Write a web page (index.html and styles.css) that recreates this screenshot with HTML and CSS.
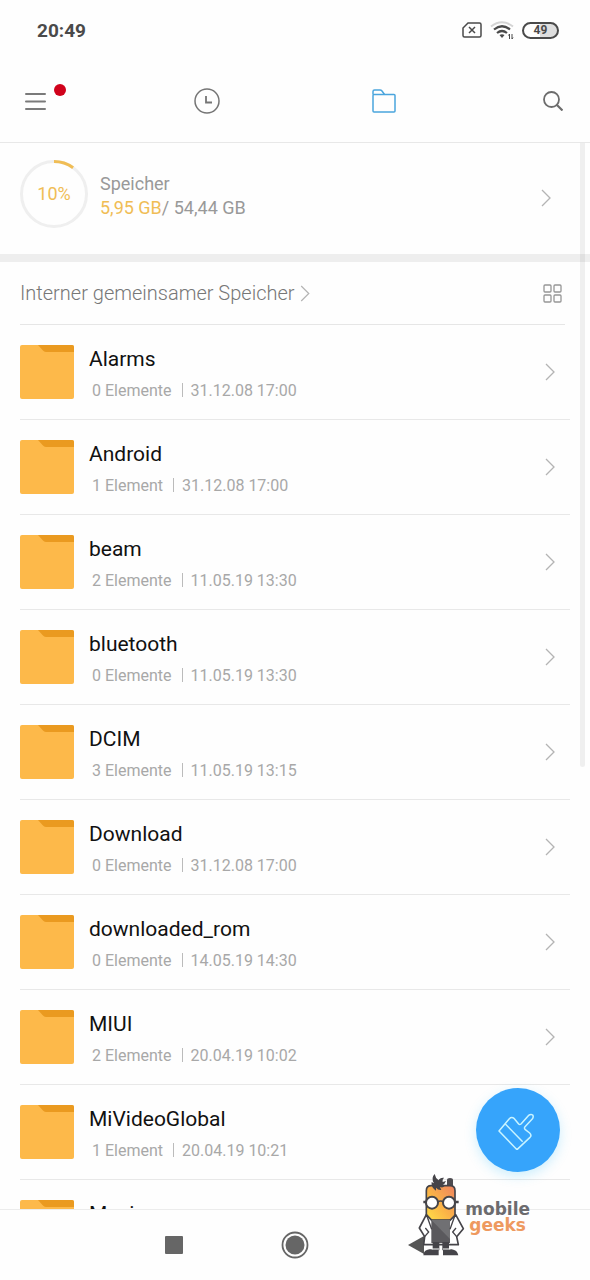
FILE: index.html
```html
<!DOCTYPE html>
<html lang="de">
<head>
    <meta charset="UTF-8">
    <meta name="viewport" content="width=device-width, initial-scale=1.0">
    <title>Dateimanager</title>
    <link rel="stylesheet" href="styles.css">
</head>
<body>
    <!-- Symbole, die mehrfach vorkommen -->
    <svg class="symbols" aria-hidden="true">
        <symbol id="folder" viewBox="0 0 54 54">
            <rect width="54" height="54" rx="2" fill="#fdb94a"/>
            <path d="M18 0h34a2 2 0 0 1 2 2v5H26q-2 0-3.500-2z" fill="#ea9a20"/>
        </symbol>
        <symbol id="chevron" viewBox="0 0 10 18">
            <path d="M1 1l8 8-8 8" fill="none" stroke="#b4b4b4" stroke-width="1.300"/>
        </symbol>
    </svg>

    <div class="screen">
        <div class="status-bar">
            <span class="time">20:49</span>
            <div class="status-icons">
                <svg width="20" height="16" viewBox="0 0 20 16" fill="none" stroke="#4a4a4a">
                    <path d="M6 1h11.500q1.500 0 1.500 1.500v11q0 1.500-1.500 1.500h-15q-1.500 0-1.500-1.500V6z" stroke-width="1.500"/>
                    <path d="M7 5l6 6M13 5l-6 6" stroke-width="1.500"/>
                </svg>
                <svg width="24" height="18" viewBox="0 0 24 18" fill="none">
                    <path d="M1 5.500Q12-3 23 5.500" stroke="#d4d4d4" stroke-width="2"/>
                    <path d="M4 8.500Q12 2 20 8.500" stroke="#4a4a4a" stroke-width="2.200"/>
                    <path d="M7 12Q12 8 17 12" stroke="#4a4a4a" stroke-width="2.200"/>
                    <path d="M12 17l-2.500-3q2.500-1.500 5 0z" fill="#4a4a4a"/>
                    <path d="M19.500 13v5M18.500 14.500l1-1.500M22 13v5M22 18l1-1.500" stroke="#4a4a4a"/>
                </svg>
                <span class="battery">49</span>
            </div>
        </div>

        <header class="toolbar">
            <button class="menu-button" aria-label="Menü">
                <svg width="21" height="18" viewBox="0 0 21 18" stroke="#7a7a7a" stroke-width="2" stroke-linecap="round">
                    <path d="M1 2h19M1 9.500h19M1 17h19"/>
                </svg>
                <span class="badge"></span>
            </button>
            <button aria-label="Zuletzt verwendet">
                <svg width="26" height="26" viewBox="0 0 26 26" fill="none" stroke="#757575" stroke-width="1.500">
                    <circle cx="13" cy="13" r="12"/>
                    <path d="M12 8v6.500h6" stroke-width="1.800"/>
                </svg>
            </button>
            <button aria-label="Ordner">
                <svg width="24" height="24" viewBox="0 0 24 24" fill="none" stroke="#4aa5dd" stroke-width="1.500">
                    <path d="M1 5.500V2.500Q1 1 2.500 1h5.500q1.200 0 2 1l2.500 3.500"/>
                    <rect x="1" y="5.500" width="22" height="17.500" rx="1"/>
                </svg>
            </button>
            <button class="search-button" aria-label="Suchen">
                <svg width="20" height="20" viewBox="0 0 20 20" fill="none" stroke="#6c6c6c" stroke-width="1.800">
                    <circle cx="8.500" cy="8.500" r="7.500"/>
                    <path d="M13.500 13.500l6 6" stroke-width="2.200"/>
                </svg>
            </button>
        </header>

        <main class="content">
            <a href="#" class="storage">
                <span class="ring">
                    <svg viewBox="0 0 68 68" fill="none" stroke-width="3">
                        <circle cx="34" cy="34" r="32.500" stroke="#efefef"/>
                        <circle cx="34" cy="34" r="32.500" stroke="#f0bd55" pathLength="100" stroke-dasharray="10 90" transform="rotate(-90 34 34)"/>
                    </svg>
                    <span class="percent">10%</span>
                </span>
                <span class="storage-text">
                    <span>Speicher</span>
                    <span><span class="used">5,95 GB</span>/ 54,44 GB</span>
                </span>
                <svg class="chevron"><use href="#chevron"/></svg>
            </a>

            <div class="path">
                <a href="#">Interner gemeinsamer Speicher
                    <svg class="path-chevron"><use href="#chevron"/></svg>
                </a>
                <button aria-label="Rasteransicht">
                    <svg width="19" height="19" viewBox="0 0 19 19" fill="none" stroke="#969696" stroke-width="1.300">
                        <rect x="1" y="1" width="7" height="7" rx="1"/>
                        <rect x="11" y="1" width="7" height="7" rx="1"/>
                        <rect x="1" y="11" width="7" height="7" rx="1"/>
                        <rect x="11" y="11" width="7" height="7" rx="1"/>
                    </svg>
                </button>
            </div>

            <ul class="folders">
                <li><a href="#">
                    <svg class="folder"><use href="#folder"/></svg>
                    <span class="name">Alarms</span>
                    <span class="meta"><span>0 Elemente</span><span>31.12.08 17:00</span></span>
                    <svg class="chevron"><use href="#chevron"/></svg>
                </a></li>
                <li><a href="#">
                    <svg class="folder"><use href="#folder"/></svg>
                    <span class="name">Android</span>
                    <span class="meta"><span>1 Element</span><span>31.12.08 17:00</span></span>
                    <svg class="chevron"><use href="#chevron"/></svg>
                </a></li>
                <li><a href="#">
                    <svg class="folder"><use href="#folder"/></svg>
                    <span class="name">beam</span>
                    <span class="meta"><span>2 Elemente</span><span>11.05.19 13:30</span></span>
                    <svg class="chevron"><use href="#chevron"/></svg>
                </a></li>
                <li><a href="#">
                    <svg class="folder"><use href="#folder"/></svg>
                    <span class="name">bluetooth</span>
                    <span class="meta"><span>0 Elemente</span><span>11.05.19 13:30</span></span>
                    <svg class="chevron"><use href="#chevron"/></svg>
                </a></li>
                <li><a href="#">
                    <svg class="folder"><use href="#folder"/></svg>
                    <span class="name">DCIM</span>
                    <span class="meta"><span>3 Elemente</span><span>11.05.19 13:15</span></span>
                    <svg class="chevron"><use href="#chevron"/></svg>
                </a></li>
                <li><a href="#">
                    <svg class="folder"><use href="#folder"/></svg>
                    <span class="name">Download</span>
                    <span class="meta"><span>0 Elemente</span><span>31.12.08 17:00</span></span>
                    <svg class="chevron"><use href="#chevron"/></svg>
                </a></li>
                <li><a href="#">
                    <svg class="folder"><use href="#folder"/></svg>
                    <span class="name">downloaded_rom</span>
                    <span class="meta"><span>0 Elemente</span><span>14.05.19 14:30</span></span>
                    <svg class="chevron"><use href="#chevron"/></svg>
                </a></li>
                <li><a href="#">
                    <svg class="folder"><use href="#folder"/></svg>
                    <span class="name">MIUI</span>
                    <span class="meta"><span>2 Elemente</span><span>20.04.19 10:02</span></span>
                    <svg class="chevron"><use href="#chevron"/></svg>
                </a></li>
                <li><a href="#">
                    <svg class="folder"><use href="#folder"/></svg>
                    <span class="name">MiVideoGlobal</span>
                    <span class="meta"><span>1 Element</span><span>20.04.19 10:21</span></span>
                    <svg class="chevron"><use href="#chevron"/></svg>
                </a></li>
                <li><a href="#">
                    <svg class="folder"><use href="#folder"/></svg>
                    <span class="name">Movies</span>
                </a></li>
            </ul>
            <div class="scrollbar"></div>
        </main>

        <nav class="nav-bar">
            <button aria-label="Letzte Apps">
                <svg width="18" height="18" viewBox="0 0 18 18"><rect width="18" height="18" rx="1" fill="#666"/></svg>
            </button>
            <button aria-label="Startseite">
                <svg width="28" height="28" viewBox="0 0 28 28">
                    <circle cx="14" cy="14" r="12.500" fill="none" stroke="#666" stroke-width="1.800"/>
                    <circle cx="14" cy="14" r="9.500" fill="#666"/>
                </svg>
            </button>
            <button aria-label="Zurück">
                <svg width="16" height="20" viewBox="0 0 16 20"><path d="M0 10L16 1v18z" fill="#555"/></svg>
            </button>
        </nav>

        <button class="clean-button" aria-label="Bereinigen">
            <svg width="40" height="40" viewBox="115 105 120 120" fill="none" stroke="#c9f4ff" stroke-width="4.500" stroke-linejoin="round">
                <path d="M118 168l31-37q7-7 15 0l13 16q3 3 7 0l22-25q7-6 13-2 4 6-2 13l-21 22q-3 4 0 8l14 11q7 7 1 13l-39 37z"/>
                <path d="M137 147l52 53"/>
            </svg>
        </button>

        <div class="logo">
            <!-- Figur mit Brille und Kittel -->
            <svg width="47" height="85" viewBox="50 22 141 255">
                <defs>
                    <linearGradient id="face" x1="0" y1="1" x2="1" y2="0">
                        <stop offset="0" stop-color="#ffdf48"/>
                        <stop offset="0.450" stop-color="#fbb447"/>
                        <stop offset="1" stop-color="#ee8260"/>
                    </linearGradient>
                </defs>
                <path d="M137 66V46q0-6 9-6t9 6v20z" fill="#4d4b50"/>
                <path d="M75 166V78q0-15 15-15h56q15 0 15 15v88z" fill="url(#face)" stroke="#454449" stroke-width="5"/>
                <path d="M104 78Q88 67 91 52l7 4Q88 40 100 28q2 12 12 19 3-9 16-8-6 5-4 13l10-3q-4 10-11 13l7 2q-5 7-14 3l4 9q-10 1-16-7z" fill="#454449"/>
                <path d="M66 112h8M164 112h8" stroke="#454449" stroke-width="8"/>
                <circle cx="92" cy="114" r="18" fill="#fff" stroke="#454449" stroke-width="6"/>
                <circle cx="143" cy="114" r="18" fill="#fff" stroke="#454449" stroke-width="6"/>
                <path d="M109 112q9-6 17 0" fill="none" stroke="#454449" stroke-width="5"/>
                <path d="M75 150L54 190l16 26-3 24h104l-5-24 20-24-23-42-18 18H92z" fill="#fff" stroke="#454449" stroke-width="5" stroke-linejoin="round"/>
                <path d="M90 166h56v69H90z" fill="#5a595d"/>
                <path d="M90 166h56v57z" fill="#707073"/>
                <path d="M76 152l15 42M161 152l-15 42M70 216l12-14-10-12M166 216l-12-14 10-12" fill="none" stroke="#454449" stroke-width="4"/>
                <path d="M94 232h20v25H94zM123 232h20v25h-20z" fill="#454449"/>
                <path d="M66 272q1-16 18-18h28v18zM125 272v-18h26q17 2 20 18z" fill="#454449"/>
                <path d="M91 253h22M125 253h22" stroke="#fff" stroke-width="3"/>
            </svg>
            <div class="wordmark">
                <span>mobile</span>
                <span class="geeks">geeks</span>
            </div>
        </div>
    </div>
</body>
</html>
```

FILE: styles.css
```css
* {
    box-sizing: border-box;
}

body {
    margin: 0;
    font-family: Roboto, Arial, sans-serif;
    background-color: #fefefe;
    color: #111;
}

a {
    color: inherit;
    text-decoration: none;
}

button {
    display: flex;
    align-items: center;
    justify-content: center;
    padding: 0;
    border: none;
    background: none;
    cursor: pointer;
}

svg {
    display: block;
    flex-shrink: 0;
}

.symbols {
    position: absolute;
    width: 0;
    height: 0;
}

.screen {
    position: relative;
    display: flex;
    flex-direction: column;
    height: 100vh;
    overflow: hidden;
}

/* Statusleiste */
.status-bar {
    display: flex;
    align-items: center;
    justify-content: space-between;
    height: 60px;
    padding: 0 31px 0 37px;
}

.time {
    font-size: 19px;
    font-weight: 700;
    color: #4a4a4a;
}

.status-icons {
    display: flex;
    align-items: center;
    gap: 8px;
}

.battery {
    width: 37px;
    height: 17px;
    border: 2px solid #4a4a4a;
    border-radius: 9px;
    background: linear-gradient(to right, #fefefe 50%, #dedede 50%);
    color: #4a4a4a;
    font-size: 12px;
    font-weight: 700;
    line-height: 13px;
    text-align: center;
}

/* Kopfzeile */
.toolbar {
    display: grid;
    grid-template-columns: 2fr 3fr 3fr 2fr;
    height: 83px;
    border-bottom: 1px solid #e8e8e8;
}

.toolbar .menu-button {
    position: relative;
    justify-content: flex-start;
    padding-left: 25px;
}

.badge {
    position: absolute;
    top: 24px;
    left: 54px;
    width: 12px;
    height: 12px;
    border-radius: 50%;
    background-color: #d0021b;
}

.toolbar .search-button {
    justify-content: flex-end;
    padding-right: 27px;
}

/* Inhalt */
.content {
    position: relative;
    flex: 1;
    min-height: 0;
    overflow: hidden;
}

.storage {
    display: flex;
    padding: 17px 39px 26px 20px;
    border-bottom: 8px solid #eee;
    font-size: 18px;
    line-height: 24px;
    color: #999;
}

.ring {
    display: grid;
    width: 68px;
    height: 68px;
    place-items: center;
}

.ring > * {
    grid-area: 1 / 1;
}

.percent,
.used {
    color: #f0bd55;
}

.storage-text {
    display: flex;
    flex: 1;
    flex-direction: column;
    padding: 12px 0 0 12px;
}

.chevron {
    width: 10px;
    height: 54px;
}

.storage .chevron {
    margin-top: 11px;
}

.path {
    display: flex;
    align-items: center;
    justify-content: space-between;
    height: 63px;
    margin: 0 25px 0 20px;
    padding-right: 3px;
    border-bottom: 1px solid #e6e6e6;
    font-size: 20px;
    font-weight: 300;
    color: #777;
}

.path a {
    display: flex;
    align-items: center;
    gap: 5px;
}

.path-chevron {
    width: 10px;
    height: 17px;
}

.folders {
    margin: 0 20px;
    padding: 0;
    list-style: none;
}

.folders a {
    display: grid;
    grid-template-columns: 54px 1fr 10px;
    grid-template-rows: 26px 20px;
    gap: 10px 15px;
    padding: 20px 15px 18px 0;
    border-bottom: 1px solid #e8e8e8;
}

.folder,
.folders .chevron {
    grid-row: 1 / 3;
}

.folders .chevron {
    grid-column: 3;
}

.folder {
    width: 54px;
    height: 54px;
}

.name {
    font-size: 21px;
    line-height: 28px;
}

.meta {
    display: flex;
    grid-column: 2;
    align-items: center;
    padding-left: 3px;
    font-size: 16px;
    line-height: 20px;
    color: #a8a8a8;
}

.meta span + span {
    margin-left: 10px;
    padding-left: 9px;
    background: linear-gradient(#bbb, #bbb) left top 2px / 1px 14px no-repeat;
}

.scrollbar {
    position: absolute;
    top: 0;
    right: 5px;
    width: 5px;
    height: 58.500%;
    border-radius: 0 0 3px 3px;
    background-color: rgba(0, 0, 0, 0.06);
}

/* Navigationsleiste */
.nav-bar {
    display: flex;
    justify-content: center;
    gap: 80px;
    height: 71px;
    border-top: 1px solid #ececec;
}

.nav-bar button {
    width: 41px;
}

.clean-button {
    position: absolute;
    right: 30px;
    bottom: 108px;
    width: 84px;
    height: 84px;
    border-radius: 50%;
    background-color: #36a4fb;
    box-shadow: 0 4px 12px rgba(54, 190, 251, 0.25);
}

.logo {
    position: absolute;
    right: 60px;
    bottom: 23px;
    display: flex;
}

.wordmark {
    display: flex;
    flex-direction: column;
    padding-top: 29px;
    font-family: "DejaVu Sans", sans-serif;
    font-size: 17px;
    font-weight: 700;
    line-height: 16px;
    color: #6c6b6e;
}

.geeks {
    padding-left: 4px;
    color: #ee995f;
}
```
